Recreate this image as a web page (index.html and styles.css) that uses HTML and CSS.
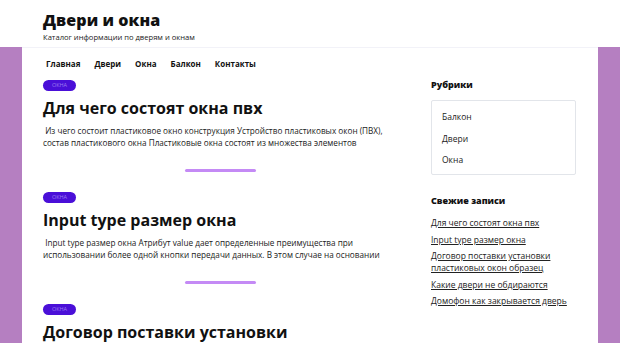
FILE: index.html
```html
<!DOCTYPE html>
<html lang="ru">
<head>
<meta charset="utf-8">
<title>Двери и окна</title>
<link rel="stylesheet" href="styles.css">
</head>
<body>
<header class="site-header">
  <div class="site-title">Двери и окна</div>
  <div class="site-desc">Каталог информации по дверям и окнам</div>
</header>
<div class="page">
  <main class="content">
    <nav class="menu">
      <a href="#">Главная</a>
      <a href="#">Двери</a>
      <a href="#">Окна</a>
      <a href="#">Балкон</a>
      <a href="#">Контакты</a>
    </nav>
    <article class="post">
      <span class="badge">Окна</span>
      <h2 class="post-title">Для чего состоят окна пвх</h2>
      <p class="excerpt">&nbsp;Из чего состоит пластиковое окно конструкция Устройство пластиковых окон (ПВХ), состав пластикового окна Пластиковые окна состоят из множества элементов</p>
      <div class="divider"></div>
    </article>
    <article class="post">
      <span class="badge">Окна</span>
      <h2 class="post-title">Input type размер окна</h2>
      <p class="excerpt">&nbsp;Input type размер окна Атрибут value дает определенные преимущества при использовании более одной кнопки передачи данных. В этом случае на основании</p>
      <div class="divider"></div>
    </article>
    <article class="post">
      <span class="badge">Окна</span>
      <h2 class="post-title">Договор поставки установки</h2>
    </article>
  </main>
  <aside class="sidebar">
    <h3 class="widget-title">Рубрики</h3>
    <ul class="cats">
      <li>Балкон</li>
      <li>Двери</li>
      <li>Окна</li>
    </ul>
    <h3 class="widget-title recent-title">Свежие записи</h3>
    <ul class="recent">
      <li><a href="#">Для чего состоят окна пвх</a></li>
      <li><a href="#">Input type размер окна</a></li>
      <li><a href="#">Договор поставки установки пластиковых окон образец</a></li>
      <li><a href="#">Какие двери не обдираются</a></li>
      <li><a href="#">Домофон как закрывается дверь</a></li>
    </ul>
  </aside>
</div>
</body>
</html>
```
FILE: styles.css
```css
* { box-sizing: border-box; }
html, body { margin: 0; padding: 0; }
body {
  background: #b57fc1;
  font-family: "Open Sans", "DejaVu Sans", sans-serif;
  color: #111;
  height: 343px;
  overflow: hidden;
}
.site-header {
  background: #fff;
  height: 47px;
  padding: 9px 0 0 43px;
}
.site-title {
  font-size: 16px;
  font-weight: 800;
  line-height: 22px;
  letter-spacing: 0.1px;
}
.site-desc {
  font-size: 7.6px;
  line-height: 10px;
  margin-top: 1px;
  color: #222;
}
.page {
  margin: 0 22px;
  background: #fff;
  border-top: 1px solid #f2f2f8;
  display: flex;
  gap: 33px;
  padding: 0 22px 0 21px;
  min-height: 300px;
}
.content { width: 355px; flex: none; }
.sidebar { width: 145px; flex: none; padding-top: 31px; }
.menu {
  display: flex;
  gap: 14px;
  padding: 10px 0 0 3px;
  height: 32px;
}
.menu a {
  color: #111;
  text-decoration: none;
  font-size: 8px;
  font-weight: 700;
  line-height: 12px;
}
.post { display: flex; flex-direction: column; align-items: flex-start; }
.badge {
  display: inline-block;
  background: #4a0fd8;
  color: #9c7cf0;
  font-size: 5.5px;
  text-transform: uppercase;
  border-radius: 6px;
  width: 33px;
  height: 11px;
  line-height: 11px;
  text-align: center;
}
.post-title {
  margin: 6px 0 0 0;
  font-size: 16px;
  font-weight: 700;
  line-height: 22px;
}
.excerpt {
  margin: 6px 0 0 0;
  font-size: 8.2px;
  line-height: 12px;
  color: #222;
}
.divider {
  align-self: center;
  width: 71px;
  height: 3px;
  background: #c48af5;
  border-radius: 2px;
  margin: 20px 0 20px 0;
}
.widget-title {
  margin: 0;
  font-size: 9px;
  font-weight: 800;
  line-height: 12px;
}
.cats {
  list-style: none;
  margin: 9px 0 0 0;
  padding: 5px 10px;
  border: 1px solid #e2e5ea;
  border-radius: 2px;
  height: 75px;
}
.cats li {
  font-size: 8.5px;
  line-height: 21.5px;
  color: #222;
}
.recent-title { margin-top: 20px; }
.recent {
  list-style: none;
  margin: 10px 0 0 0;
  padding: 0;
}
.recent li { margin-bottom: 4.5px; line-height: 12px; font-size: 8.5px; }
.recent a {
  color: #222;
  text-decoration: underline;
}
```
